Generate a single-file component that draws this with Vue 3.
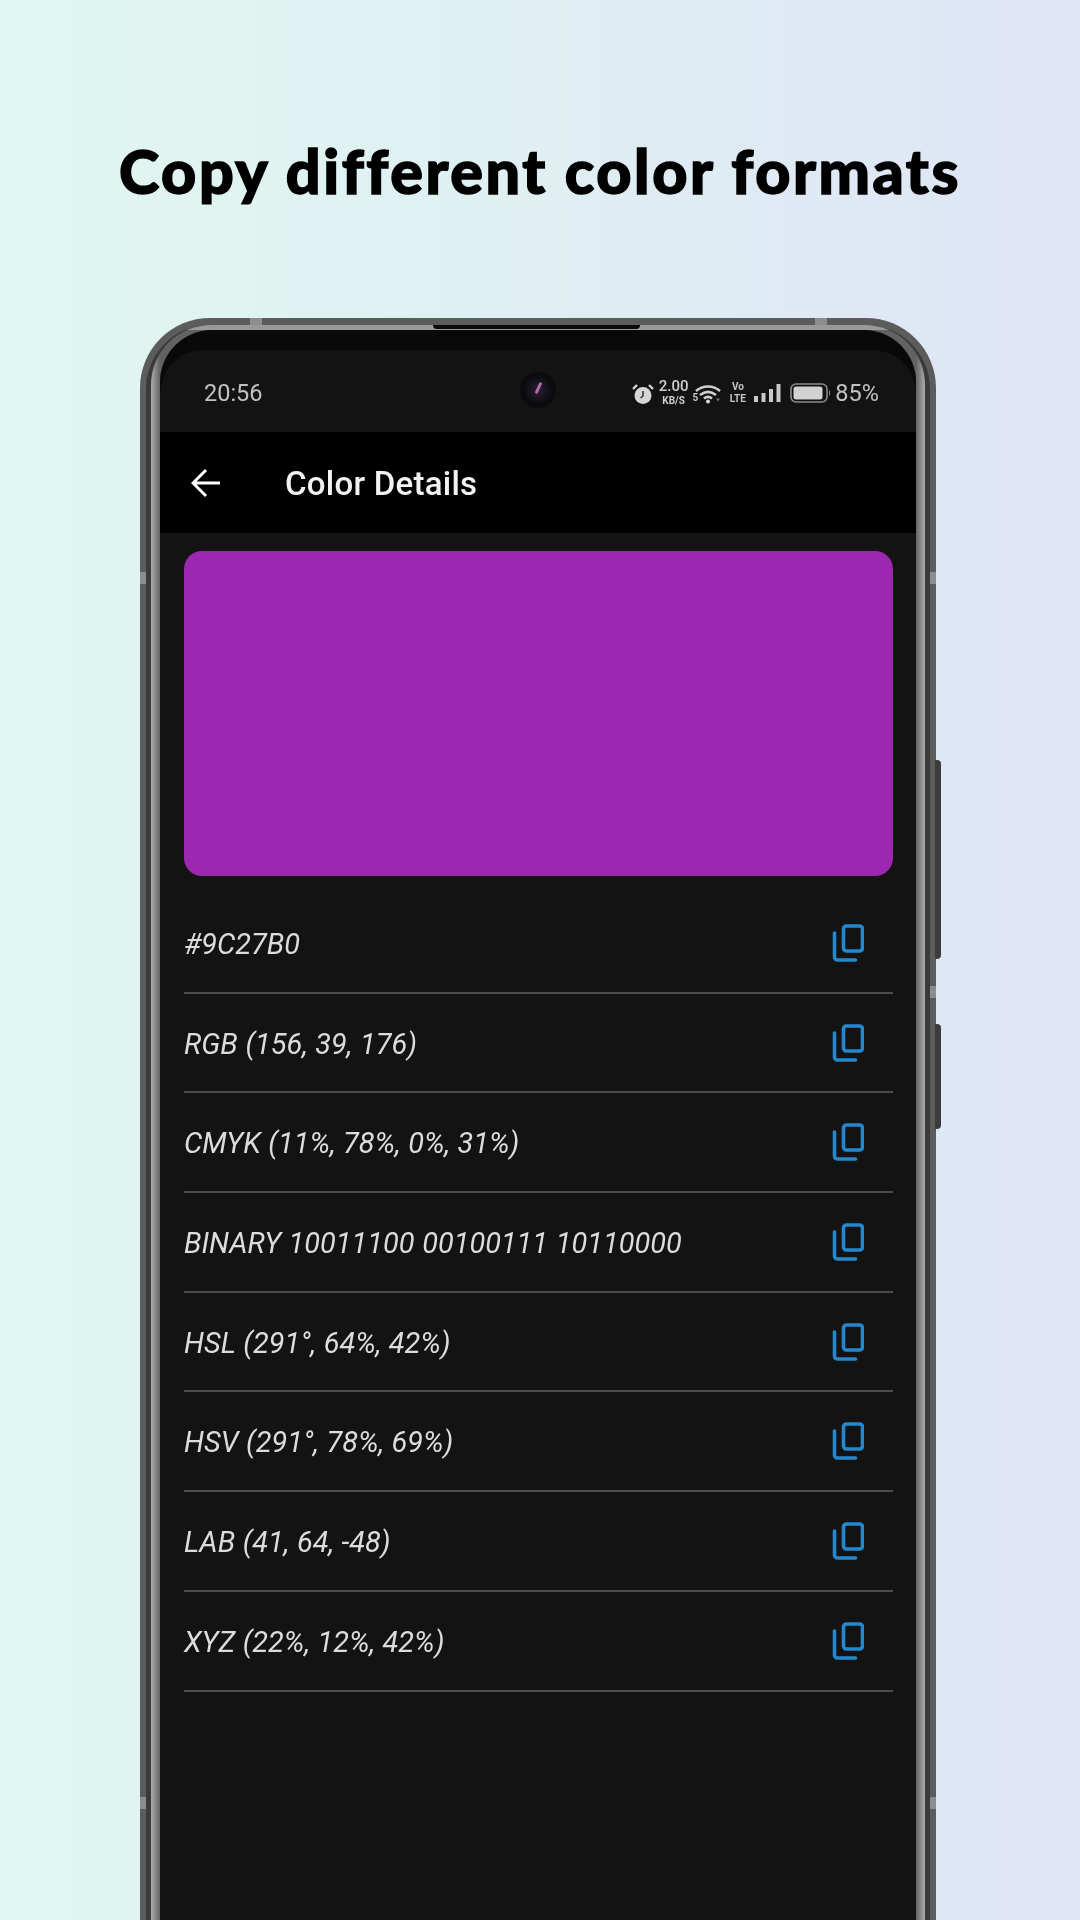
<script setup>
const rows = [
  '#9C27B0',
  'RGB (156, 39, 176)',
  'CMYK (11%, 78%, 0%, 31%)',
  'BINARY 10011100 00100111 10110000',
  'HSL (291°, 64%, 42%)',
  'HSV (291°, 78%, 69%)',
  'LAB (41, 64, -48)',
  'XYZ (22%, 12%, 42%)',
]
</script>

<template>
  <div class="page">
    <h1 class="title">Copy different color formats</h1>
    <div class="phone">
      <i class="btn btn-a"></i>
      <i class="btn btn-b"></i>
      <i class="mark mt-l"></i>
      <i class="mark mt-r"></i>
      <i class="mark ms ms-l1"></i>
      <i class="mark ms ms-l2"></i>
      <i class="mark ms ms-r1"></i>
      <i class="mark ms ms-r2"></i>
      <i class="mark ms ms-r3"></i>
      <div class="mid">
        <div class="rim">
          <i class="notch"></i>
          <div class="bezel">
            <div class="screen">
              <div class="status">
                <span class="time">20:56</span>
                <div class="camera"><i></i></div>
                <div class="indicators">
                  <svg class="alarm" viewBox="0 0 22 22" width="22" height="22">
                    <circle cx="11" cy="12.5" r="8.5" fill="#d6d6d6" />
                    <path d="M11 8v5l-2.5 2" fill="none" stroke="#222" stroke-width="1.4" />
                    <path d="M1 6l4-4M21 6l-4-4" stroke="#d6d6d6" stroke-width="2.4" />
                  </svg>
                  <div class="speed"><b>2.00</b><small>KB/S</small></div>
                  <div class="wifi">
                    <span>5</span>
                    <svg viewBox="0 0 26 20" width="26" height="21">
                      <g fill="none" stroke="#d0d0d0" stroke-width="2.6">
                        <path d="M1 7.5c7-6 17-6 24 0" />
                        <path d="M5 11.5c5-4 11-4 16 0" />
                        <path d="M9 15c2.500-2 5.500-2 8 0" />
                      </g>
                      <circle cx="13" cy="18" r="2" fill="#d8d8d8" />
                      <path d="M21 15h4l-2 3z" fill="#777" />
                    </svg>
                  </div>
                  <div class="volte"><span>Vo</span><span>LTE</span></div>
                  <svg class="signal" viewBox="0 0 27 20" width="27" height="20">
                    <rect x="0" y="13" width="4" height="6" fill="#c8c8c8" />
                    <rect x="7.500" y="10" width="4" height="9" fill="#c8c8c8" />
                    <rect x="15" y="6" width="4" height="13" fill="#c8c8c8" />
                    <rect x="22.500" y="1" width="4" height="18" fill="#c8c8c8" />
                  </svg>
                  <svg class="battery" viewBox="0 0 41 20" width="41" height="20">
                    <rect x="1" y="1" width="36" height="18" rx="5" fill="none" stroke="#8c8c8c" stroke-width="1.600" />
                    <rect x="3.500" y="3.500" width="29" height="13" rx="2.500" fill="#d2d2d2" />
                    <path d="M39 7c1.500.5 1.500 5.500 0 6z" fill="#8c8c8c" />
                  </svg>
                  <span class="pct">85%</span>
                </div>
              </div>
              <header class="appbar">
                <svg class="back" viewBox="0 0 30 30" width="30" height="30">
                  <path d="M29 15H3M15 2L2 15l13 13" fill="none" stroke="#fff" stroke-width="3" />
                </svg>
                <span class="heading">Color Details</span>
              </header>
              <main class="content">
                <div class="swatch"></div>
                <ul class="list">
                  <li v-for="row in rows" :key="row" class="row">
                    <span class="value">{{ row }}</span>
                    <svg class="copy" viewBox="0 0 32 38" width="32" height="38">
                      <rect x="11.500" y="2" width="19" height="25" rx="3" fill="none" stroke="#2488cf" stroke-width="3.600" />
                      <path d="M2.500 9v24a3 3 0 0 0 3 3h18" fill="none" stroke="#2488cf" stroke-width="3.600" stroke-linecap="round" />
                    </svg>
                  </li>
                </ul>
              </main>
            </div>
          </div>
        </div>
      </div>
    </div>
  </div>
</template>

<style>
html, body { margin: 0; padding: 0; }
</style>

<style scoped>
.page {
  width: 1080px;
  height: 1920px;
  overflow: hidden;
  background: linear-gradient(90deg, #e0f7f1 0%, #dfeff2 50%, #dfe4f6 100%);
  font-family: Roboto, "Liberation Sans", sans-serif;
}
.title {
  margin: 0;
  height: 318px;
  box-sizing: border-box;
  padding-top: 135px;
  text-align: center;
  font-family: Lato, "Noto Sans", sans-serif;
  font-size: 61px;
  font-weight: 900;
  line-height: 72px;
  letter-spacing: 2.55px;
  color: #000;
  -webkit-text-stroke: 1.5px #000;
}
.phone {
  position: relative;
  width: 784px;
  height: 1700px;
  margin-left: 140px;
  padding: 7px 6px 0;
  background: #5c5c5c;
  border-radius: 70px 70px 0 0;
  filter: blur(0.45px);
}
.btn {
  position: absolute;
  right: -5px;
  width: 6px;
  background: #3c3c3c;
  border-radius: 0 4px 4px 0;
}
.btn-a { top: 442px; height: 199px; }
.btn-b { top: 706px; height: 105px; }
.mark {
  position: absolute;
  background: #8d8d8d;
  z-index: 1;
}
.mt-l { top: 0; left: 110px; width: 12px; height: 7px; }
.mt-r { top: 0; left: 675px; width: 12px; height: 7px; }
.ms { width: 6px; height: 12px; }
.ms-l1 { left: 0; top: 254px; }
.ms-l2 { left: 0; top: 1479px; }
.ms-r1 { right: 0; top: 254px; }
.ms-r2 { right: 0; top: 668px; }
.ms-r3 { right: 0; top: 1479px; }
.mid {
  height: 100%;
  padding: 0 5px;
  background: #3a3a3a;
  border-radius: 64px 64px 0 0;
}
.rim {
  position: relative;
  height: 100%;
  box-sizing: border-box;
  padding: 5px 9px 0;
  border-radius: 60px 60px 0 0;
  background:
    linear-gradient(180deg, #999 0, #999 5px, transparent 5px),
    linear-gradient(90deg, #adadad 0, #626262 9px, #626262 calc(100% - 9px), #adadad 100%);
}
.notch {
  position: absolute;
  top: 0;
  left: 282px;
  width: 207px;
  height: 4px;
  background: #0a0a0a;
  border-radius: 0 0 4px 4px;
}
.bezel {
  height: 100%;
  box-sizing: border-box;
  padding-top: 20px;
  background: #090909;
  border-radius: 52px 52px 0 0;
}
.screen {
  height: 100%;
  background: #131313;
  border-radius: 44px 44px 0 0;
  overflow: hidden;
}
.status {
  position: relative;
  display: flex;
  align-items: center;
  justify-content: space-between;
  height: 82px;
  box-sizing: border-box;
  padding: 0 37px 0 44px;
  color: #c2c2c2;
  font-size: 23.5px;
}
.time, .pct { position: relative; top: 2px; }
.pct { top: 0; }
.camera {
  position: absolute;
  left: 360px;
  top: 22px;
  width: 36px;
  height: 36px;
  border-radius: 50%;
  background: radial-gradient(circle at 50% 50%, #2a1d33 0, #0c0c10 55%, #08080a 100%);
}
.camera i {
  position: absolute;
  left: 17px;
  top: 10px;
  width: 3px;
  height: 12px;
  background: #b06ba8;
  border-radius: 2px;
  transform: rotate(25deg);
}
.indicators {
  position: relative;
  top: 2px;
  display: flex;
  align-items: center;
}
.alarm { margin-right: 5px; position: relative; top: 1px; }
.speed {
  display: flex;
  flex-direction: column;
  align-items: center;
  margin-right: 4px;
  width: 30px;
  line-height: 1;
  color: #cfcfcf;
}
.speed b { font-size: 15px; font-weight: 500; line-height: 15px; }
.speed small { margin-top: 1.2px; font-size: 10px; font-weight: 700; line-height: 12px; }
.wifi { display: flex; align-items: flex-end; margin-right: 10px; }
.wifi span { font-size: 10px; font-weight: 700; margin-right: -3px; line-height: 12px; }
.volte {
  display: flex;
  flex-direction: column;
  align-items: center;
  width: 13px;
  margin-right: 10px;
  font-size: 10px;
  font-weight: 700;
  line-height: 12px;
  color: #c4c4c4;
}
.signal { margin-right: 9px; }
.battery { margin-right: 4px; }
.appbar {
  display: flex;
  align-items: center;
  height: 101px;
  padding-left: 31px;
  background: #000;
}
.heading {
  position: relative;
  top: 1px;
  margin-left: 64px;
  font-size: 33px;
  font-weight: 500;
  letter-spacing: 0.25px;
  color: #f2f2f2;
}
.content { padding: 18px 23px 0 24px; }
.swatch {
  height: 325px;
  background: #9c27b0;
  border-radius: 18px;
}
.list {
  list-style: none;
  margin: 18px 0 0;
  padding: 0;
}
.row {
  display: flex;
  align-items: center;
  justify-content: space-between;
  height: 99.7px;
  box-sizing: border-box;
  padding-right: 29px;
  border-bottom: 2px solid #4c4c4c;
}
.value {
  position: relative;
  top: 1px;
  font-size: 28.9px;
  font-style: italic;
  word-spacing: 0.5px;
  color: #dcdcdc;
}
</style>
